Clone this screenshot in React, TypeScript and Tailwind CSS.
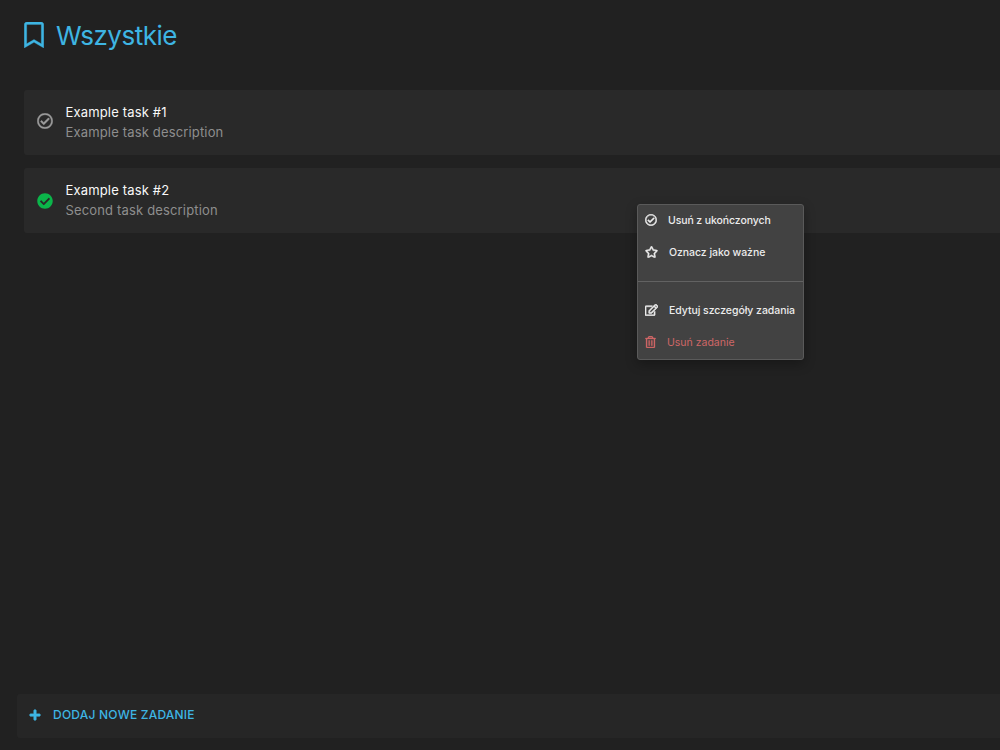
import React from "react";
import {
  FaCheckCircle,
  FaPlus,
  FaRegBookmark,
  FaRegCheckCircle,
  FaRegEdit,
  FaRegStar,
  FaRegTrashAlt,
} from "react-icons/fa";

const tasks = [
  {
    id: 1,
    title: "Example task #1",
    description: "Example task description",
    completed: false,
  },
  {
    id: 2,
    title: "Example task #2",
    description: "Second task description",
    completed: true,
  },
];

const Task = ({ task }: { task: (typeof tasks)[number] }) => {
  return (
    <li className="flex h-[65px] items-center rounded-l-[3px] bg-[#292929] pb-[2px] pl-[13px]">
      {task.completed ? (
        <FaCheckCircle className="mt-[2px] size-4 shrink-0 text-[#0bb54a]" />
      ) : (
        <FaRegCheckCircle className="mb-px size-4 shrink-0 stroke-current stroke-[12] text-[#9c9c9c]" />
      )}
      <div className="ml-[12.5px] whitespace-nowrap text-[13px] leading-5 tracking-[0.16px]">
        <p className="text-[#f8f8f8]">{task.title}</p>
        <p className="text-[#8e8e8e]">{task.description}</p>
      </div>
    </li>
  );
};

const ContextMenu = () => {
  return (
    <div className="absolute left-[637px] top-[204px] h-[156px] w-[167px] whitespace-nowrap rounded-[3px] border border-[#5a5a5a] bg-[#424242] text-[10.5px] font-medium tracking-[-0.1px] text-[#ececec] shadow-[0_4px_12px_rgba(0,0,0,0.3)]">
      <button className="flex h-[31px] w-full items-center pl-[7px]">
        <FaRegCheckCircle className="mb-px mr-[11px] h-3 w-3 shrink-0 stroke-current stroke-[18]" />
        <span>Usuń z ukończonych</span>
      </button>
      <button className="flex h-8 w-full items-center pl-[7px]">
        <FaRegStar className="mr-[11px] h-3 w-[13px] shrink-0 stroke-current stroke-[24]" />
        <span className="mt-px tracking-[-0.05px]">Oznacz jako ważne</span>
      </button>
      <hr className="mb-3 mt-[13px] border-[#626262]" />
      <button className="flex h-8 w-full items-center pl-[7px]">
        <FaRegEdit className="mr-[11px] h-3 w-[13px] shrink-0 stroke-current stroke-[24]" />
        <span className="mt-px tracking-[-0.05px]">Edytuj szczegóły zadania</span>
      </button>
      <button className="flex h-8 w-full items-center pl-[7px] font-normal tracking-normal text-[#cf6767]">
        <FaRegTrashAlt className="mr-[11px] h-3 w-[11px] shrink-0 stroke-current stroke-[12]" />
        <span className="mt-px">Usuń zadanie</span>
      </button>
    </div>
  );
};

const App = () => {
  return (
    <div className="relative flex h-[750px] flex-col overflow-hidden bg-[#212121] font-['Inter',sans-serif]">
      <header className="flex h-[70px] items-center pl-6 text-[#3eb5e3]">
        <FaRegBookmark className="h-[26px] w-5 stroke-current stroke-[6]" />
        <h1 className="ml-3 text-[26px] tracking-[-0.5px]">Wszystkie</h1>
      </header>
      <ul className="mt-5 flex flex-col gap-[13px] pl-6">
        {tasks.map((task) => (
          <Task key={task.id} task={task} />
        ))}
      </ul>
      <button className="mb-3 ml-[17px] mt-auto flex h-11 items-center rounded-l-[3px] bg-[#262626] pb-[2px] pl-3 text-[#3eb5e3]">
        <FaPlus className="size-3 stroke-current stroke-[30]" />
        <span className="ml-3 text-[12px] font-medium tracking-[0.22px]">
          DODAJ NOWE ZADANIE
        </span>
      </button>
      <ContextMenu />
    </div>
  );
};

export default App;
